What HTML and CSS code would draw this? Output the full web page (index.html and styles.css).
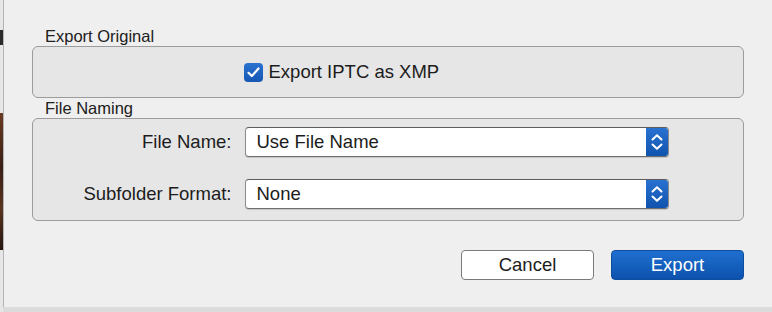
FILE: index.html
```html
<!DOCTYPE html>
<html>
<head>
<meta charset="utf-8">
<link rel="stylesheet" href="styles.css">
</head>
<body>
  <div class="behind">
    <div class="bh-a"></div>
    <div class="bh-glyph"></div>
    <div class="bh-b"></div>
    <div class="bh-img"></div>
    <div class="bh-c"></div>
  </div>
  <div class="sheet">
    <div class="group-label">Export Original</div>
    <div class="box box-export">
      <label class="check">
        <span class="checkbox">
          <svg width="13" height="11" viewBox="0 0 13 11"><path d="M1.5 5.8 L4.8 9 L11.5 1.5" fill="none" stroke="#fff" stroke-width="2.2" stroke-linecap="round" stroke-linejoin="round"/></svg>
        </span>
        <span class="check-text">Export IPTC as XMP</span>
      </label>
    </div>
    <div class="group-label group-label-2">File Naming</div>
    <div class="box box-naming">
      <div class="row">
        <div class="row-label">File Name:</div>
        <div class="popup">
          <span class="popup-text">Use File Name</span>
          <span class="stepper">
            <svg width="12" height="18" viewBox="0 0 12 18"><path d="M1.5 6.5 L6 2.2 L10.5 6.5 M1.5 11.5 L6 15.8 L10.5 11.5" fill="none" stroke="#fff" stroke-width="2" stroke-linecap="round" stroke-linejoin="round"/></svg>
          </span>
        </div>
      </div>
      <div class="row">
        <div class="row-label">Subfolder Format:</div>
        <div class="popup">
          <span class="popup-text">None</span>
          <span class="stepper">
            <svg width="12" height="18" viewBox="0 0 12 18"><path d="M1.5 6.5 L6 2.2 L10.5 6.5 M1.5 11.5 L6 15.8 L10.5 11.5" fill="none" stroke="#fff" stroke-width="2" stroke-linecap="round" stroke-linejoin="round"/></svg>
          </span>
        </div>
      </div>
    </div>
    <div class="buttons">
      <button class="btn btn-cancel">Cancel</button>
      <button class="btn btn-export">Export</button>
    </div>
  </div>
</body>
</html>
```
FILE: styles.css
```css
* { box-sizing: border-box; }
html, body { margin: 0; padding: 0; }
body {
  width: 772px;
  height: 312px;
  overflow: hidden;
  display: flex;
  align-items: flex-start;
  background: linear-gradient(#c2c2c2, #d6d6d6 60%, #dcdcdc);
  font-family: "Liberation Sans", Arial, sans-serif;
  color: #1c1c1c;
}
.behind {
  width: 3px;
  height: 312px;
  display: flex;
  flex-direction: column;
  background: #e6e6e6;
}
.bh-a { height: 30px; }
.bh-glyph { height: 15px; background: #2a2a2a; }
.bh-b { height: 68px; }
.bh-img { height: 137px; background: linear-gradient(#6a3a22, #3a2016 40%, #5a3420 70%, #241410); }
.bh-c { flex: 1; }
.sheet {
  width: 769px;
  height: 307px;
  background: #efefef;
  border-left: 1px solid #b4b4b4;
  padding: 27px 28px 0 28px;
  display: flex;
  flex-direction: column;
}
.group-label {
  font-size: 16.5px;
  line-height: 19px;
  height: 19px;
  padding-left: 13px;
  color: #202020;
}
.group-label-2 {
  height: 20px;
  line-height: 20px;
}
.box {
  border: 1.5px solid #9c9c9c;
  border-radius: 6px;
  background: #e6e6e6;
}
.box-export {
  height: 52px;
  display: flex;
  align-items: center;
  padding-left: 210.5px;
}
.check {
  display: flex;
  align-items: center;
  gap: 6px;
}
.checkbox {
  width: 19px;
  height: 19px;
  border-radius: 4px;
  background: linear-gradient(#2a71d0, #1657b3);
  display: flex;
  align-items: center;
  justify-content: center;
}
.check-text {
  font-size: 18.5px;
  line-height: 22px;
}
.box-naming {
  height: 103px;
  padding: 7.5px 0 0 0;
  display: flex;
  flex-direction: column;
  gap: 22px;
}
.row {
  display: grid;
  grid-template-columns: 198.5px 424px;
  column-gap: 13px;
  align-items: center;
}
.row-label {
  text-align: right;
  font-size: 18.5px;
  line-height: 22px;
}
.popup {
  height: 30px;
  display: flex;
  border-radius: 4px;
  background: #fff;
  border: 1px solid #8c8c8c;
  border-top-color: #5e5e5e;
  border-bottom-color: #6e6e6e;
  box-shadow: 0 0.5px 1px rgba(0,0,0,0.15);
  overflow: hidden;
}
.popup-text {
  flex: 1;
  padding-left: 11px;
  font-size: 18.5px;
  line-height: 28px;
}
.stepper {
  width: 23px;
  margin: -1px -1px -1px 0;
  background: linear-gradient(#2a72d2, #0f52ad);
  border-radius: 0 4px 4px 0;
  display: flex;
  align-items: center;
  justify-content: center;
}
.buttons {
  margin-top: 29px;
  display: flex;
  justify-content: flex-end;
  gap: 17px;
}
.btn {
  width: 133px;
  height: 30px;
  border-radius: 4px;
  font-family: "Liberation Sans", Arial, sans-serif;
  font-size: 18.5px;
  padding: 0;
  line-height: 28px;
}
.btn-cancel {
  background: #fff;
  border: 1px solid #7a7a7a;
  color: #1c1c1c;
}
.btn-export {
  background: linear-gradient(#1f6fcf, #0c52ad);
  border: 1px solid #0d4f9e;
  color: #fff;
}
```
